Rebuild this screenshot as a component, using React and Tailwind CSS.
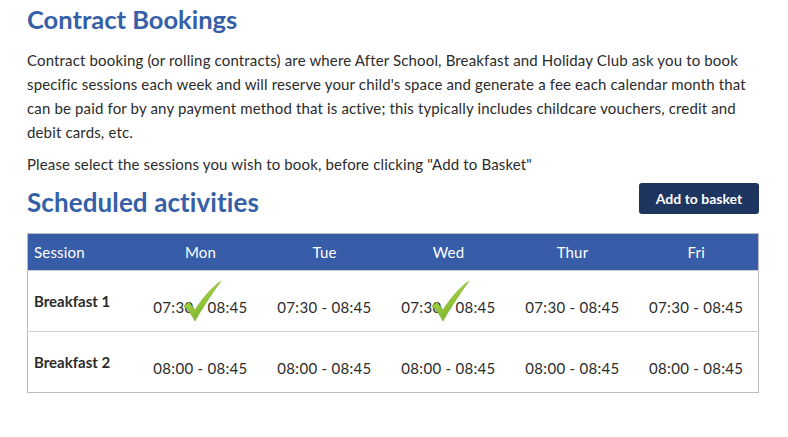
import React from 'react';

const days = ['Mon', 'Tue', 'Wed', 'Thur', 'Fri'];

const rows = [
  { name: 'Breakfast 1', time: '07:30 - 08:45', picked: ['Mon', 'Wed'] },
  { name: 'Breakfast 2', time: '08:00 - 08:45', picked: [] },
];

const Tick = () => (
  <svg viewBox="0 0 40 42" className="absolute left-[44px] top-[9px] w-[40px] h-[42px] pointer-events-none">
    <defs>
      <linearGradient id="tickg" x1="0" y1="0" x2="0.6" y2="1">
        <stop offset="0" stopColor="#c3e36e" />
        <stop offset="0.5" stopColor="#9ccc3f" />
        <stop offset="1" stopColor="#72ad24" />
      </linearGradient>
    </defs>
    <path d="M1 26 L6 22 L12 30 C19 19 28 8 38 1 C31 11 21 25 12 41 C9 35 5 30 1 26 Z" fill="url(#tickg)" stroke="#6ca126" strokeWidth="0.5" strokeLinejoin="round" />
  </svg>
);

const App = () => {
  return (
    <div className="min-h-screen bg-white text-[#2b2b2b] font-['Lato',sans-serif] pl-[27px] pr-[29px] pt-[4px]">
      <h1 className="text-[25.5px] font-bold text-[#3560a8] leading-[30px]">Contract Bookings</h1>

      <p className="mt-[14px] text-[15px] tracking-[0.15px] leading-[24px] w-[735px]">
        Contract booking (or rolling contracts) are where After School, Breakfast and Holiday Club ask you to book specific sessions each week and will reserve your child's space and generate a fee each calendar month that can be paid for by any payment method that is active; this typically includes childcare vouchers, credit and debit cards, etc.
      </p>
      <p className="mt-[8px] text-[15px] tracking-[0.15px] leading-[24px]">
        Please select the sessions you wish to book, before clicking "Add to Basket"
      </p>

      <div className="flex items-end justify-between mt-[7px]">
        <h2 className="text-[26px] font-bold text-[#3560a8] leading-[30px] mb-[-3px] tracking-[0.1px]">Scheduled activities</h2>
        <button className="bg-[#1e3560] text-white text-[14px] font-bold rounded-[3px] w-[120px] h-[31px]">
          Add to basket
        </button>
      </div>

      <table className="mt-[19px] w-[732px] border-collapse border border-[#bdbdbd] table-fixed">
        <thead>
          <tr className="bg-[#375ca8] text-white text-[15px] h-[37px]">
            <th className="w-[111px] text-left font-normal pl-[6px] tracking-[0.2px]">Session</th>
            {days.map((d) => (
              <th key={d} className="font-normal text-center tracking-[0.2px]">{d}</th>
            ))}
          </tr>
        </thead>
        <tbody>
          {rows.map((r) => (
            <tr key={r.name} className="h-[61px] border-t border-[#cfcfcf]">
              <td className="align-top pl-[6px] pt-[19px] text-[15px] font-bold">{r.name}</td>
              {days.map((d) => (
                <td key={d} className="relative text-center text-[15px] tracking-[0.3px] pt-[12px]">
                  {r.time}
                  {r.picked.includes(d) && <Tick />}
                </td>
              ))}
            </tr>
          ))}
        </tbody>
      </table>
    </div>
  );
};

export default App;
